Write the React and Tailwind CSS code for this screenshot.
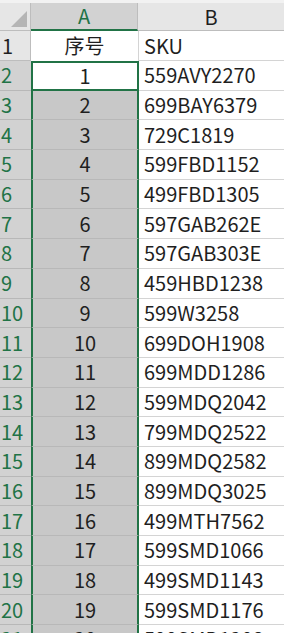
const rows = [
  [1, "559AVY2270"],
  [2, "699BAY6379"],
  [3, "729C1819"],
  [4, "599FBD1152"],
  [5, "499FBD1305"],
  [6, "597GAB262E"],
  [7, "597GAB303E"],
  [8, "459HBD1238"],
  [9, "599W3258"],
  [10, "699DOH1908"],
  [11, "699MDD1286"],
  [12, "599MDQ2042"],
  [13, "799MDQ2522"],
  [14, "899MDQ2582"],
  [15, "899MDQ3025"],
  [16, "499MTH7562"],
  [17, "599SMD1066"],
  [18, "499SMD1143"],
  [19, "599SMD1176"],
  [20, "599SMD1208"],
];

const font = {
  fontFamily: '"Noto Sans CJK SC", "Noto Sans", sans-serif',
};

export default function App() {
  return (
    <div
      className="w-[284px] h-[633px] overflow-hidden bg-white text-[20px] text-[#1f1f1f]"
      style={font}
    >
      {/* column headers */}
      <div className="flex h-[31px] border-t-[3px] border-[#f2f2f2]">
        <div className="relative w-[31px] shrink-0 bg-[#e6e6e6] border-r border-b border-[#bdbdbd]">
          <svg
            className="absolute right-[3px] bottom-[3px]"
            width="16"
            height="16"
            viewBox="0 0 16 16"
          >
            <polygon points="16,0 16,16 0,16" fill="#b5b5b5" />
          </svg>
        </div>
        <div className="w-[107px] shrink-0 flex items-center justify-center bg-[#d2d2d2] text-[#217346] border-b-2 border-[#217346] border-r border-r-[#bdbdbd] leading-none">
          A
        </div>
        <div className="flex-1 flex items-center justify-center bg-[#e6e6e6] border-b border-[#bdbdbd] leading-none">
          B
        </div>
      </div>

      {/* row 1 */}
      <div className="flex h-[30px]">
        <div className="w-[31px] shrink-0 bg-[#e6e6e6] border-r border-b border-[#bdbdbd] pl-[2px] flex items-center leading-none">
          1
        </div>
        <div className="w-[108px] shrink-0 flex items-center justify-center border-r border-[#d4d4d4] leading-none">
          序号
        </div>
        <div className="flex-1 flex items-center pl-[5px] border-b border-[#d4d4d4] leading-none">
          SKU
        </div>
      </div>

      {/* data rows */}
      {rows.map(([n, sku], i) => (
        <div key={n} className="flex h-[29.7px]">
          <div className="w-[31px] shrink-0 bg-[#d2d2d2] text-[#217346] border-b border-[#b8b8b8] pl-[1px] flex items-center leading-none">
            {n + 1}
          </div>
          <div
            className={`w-[108px] shrink-0 flex items-center justify-center border-x-2 border-[#217346] leading-none ${
              i === 0
                ? "bg-white border-t-2 border-b-2"
                : "bg-[#c8c8c8] border-b border-b-[#b8b8b8]"
            }`}
          >
            {n}
          </div>
          <div className="flex-1 flex items-center pl-[5px] border-b border-[#d4d4d4] leading-none">
            {sku}
          </div>
        </div>
      ))}
    </div>
  );
}
